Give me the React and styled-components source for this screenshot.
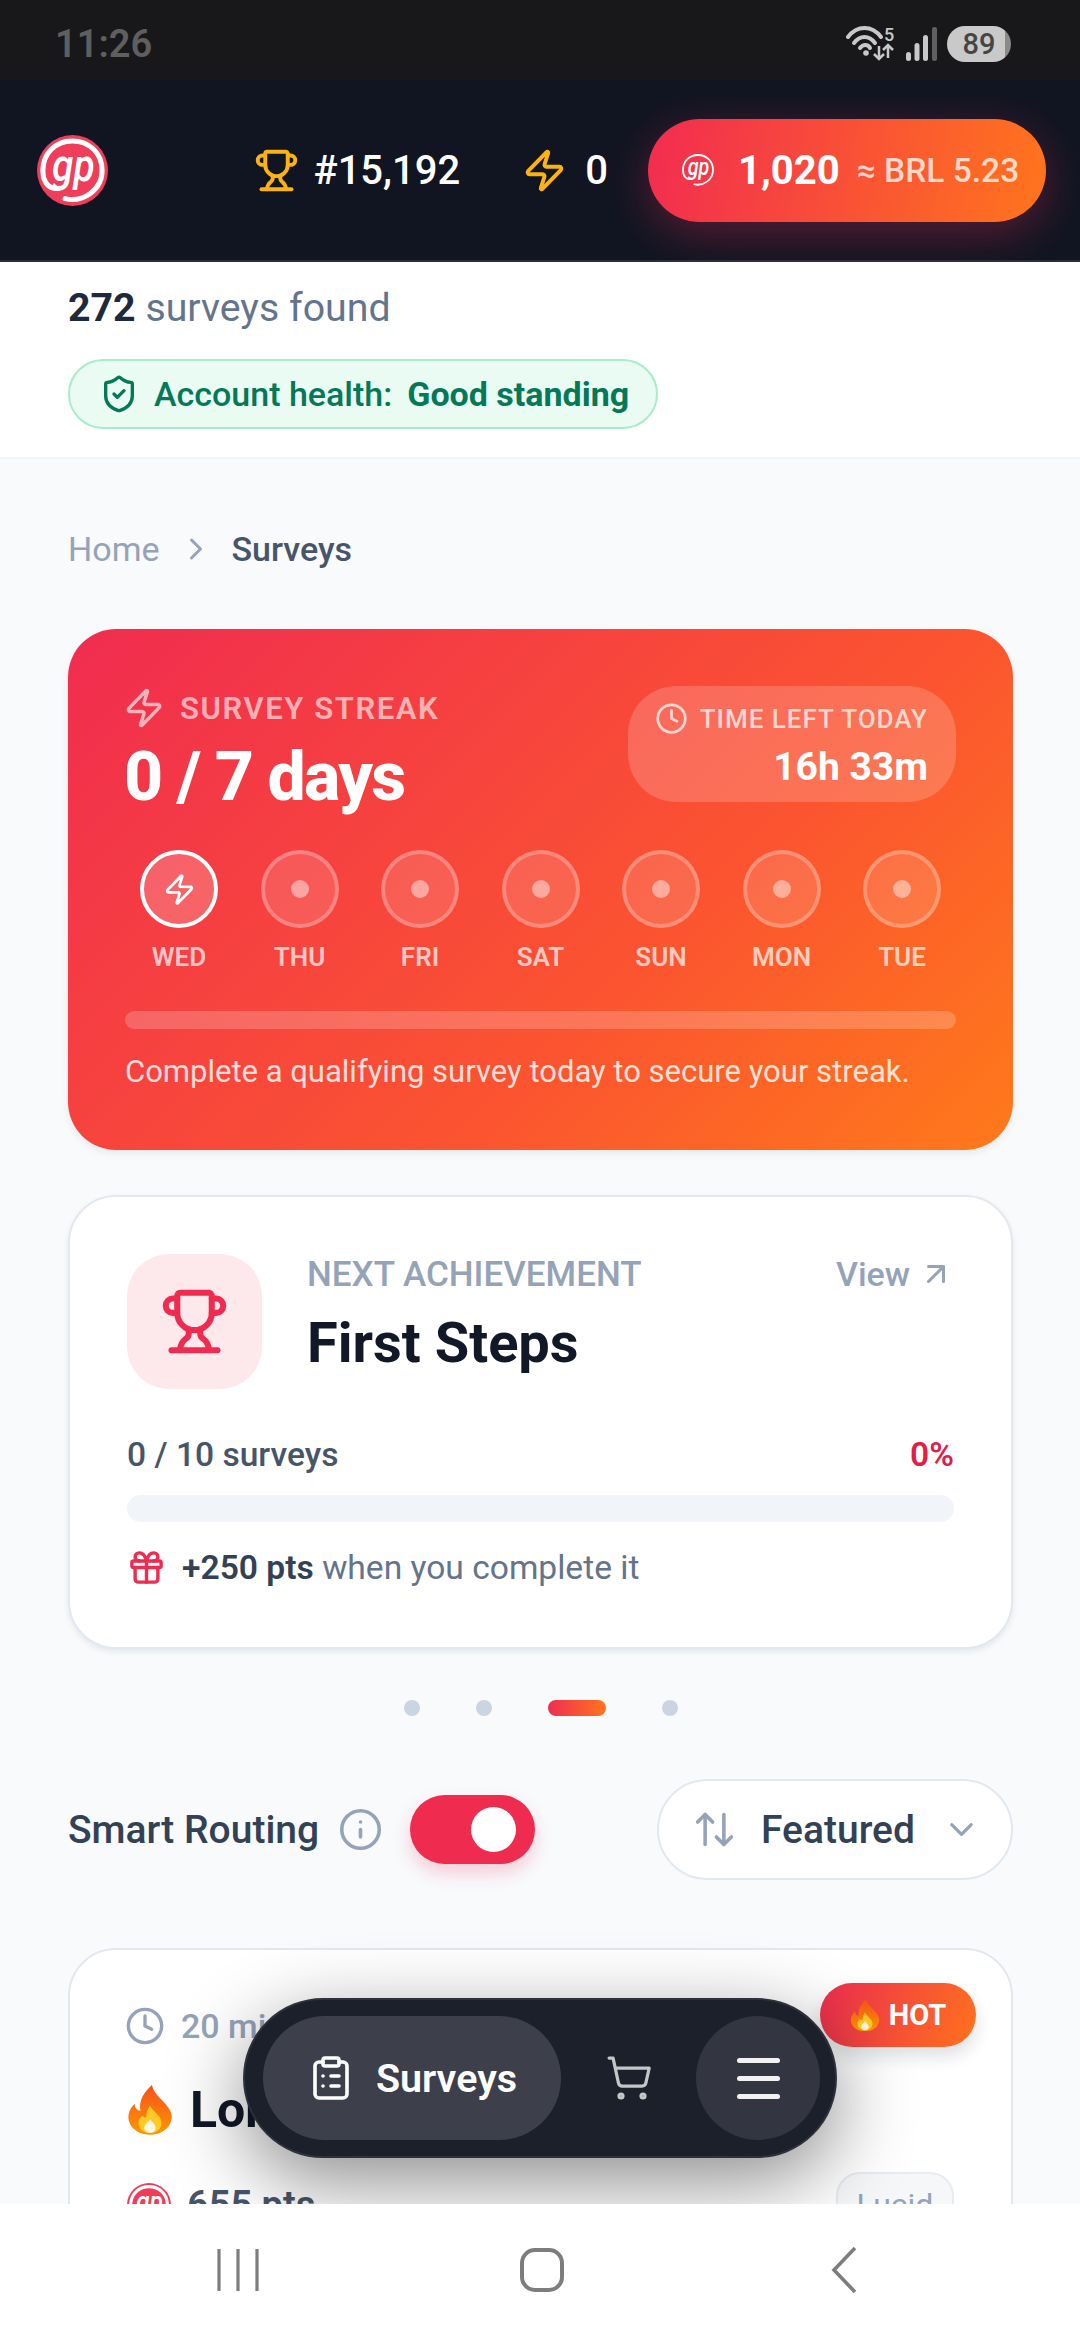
import React from 'react';
import styled, { createGlobalStyle } from 'styled-components';
import { Trophy, Zap, Clock, ShieldCheck, ChevronRight, ChevronDown, Gift, ArrowUpRight, Info, ArrowUpDown, ClipboardList, ShoppingCart } from 'lucide-react';

const Global = createGlobalStyle`
  html, body { margin: 0; padding: 0; background: #fff; }
  * { box-sizing: border-box; }
  svg { flex-shrink: 0; }
  body { font-family: Roboto, "Noto Sans", sans-serif; }
`;

const Screen = styled.div`
  width: 1080px; height: 2340px; display: flex; flex-direction: column; overflow: hidden; background: #fff;
`;
const StatusBar = styled.div`
  height: 80px; flex: none; background: #18181a; display: flex; align-items: center; justify-content: space-between;
  padding: 0 69px 0 55px;
`;
const Time = styled.span`font-size: 38px; font-weight: 600; color: #5f5f5f; margin-top: 7px;`;
const StatusIcons = styled.div`display: flex; align-items: center; gap: 10px; margin-top: 8px;`;
const Battery = styled.div`
  width: 64px; height: 36px; border-radius: 18px; overflow: hidden; display: flex; align-items: center; justify-content: center;
  font-size: 29px; font-weight: 500; color: #454545; background: linear-gradient(90deg, #c9c9c9 91%, #8a8a8a 91%);
`;
const Header = styled.header`
  height: 182px; flex: none; background: #111522; border-bottom: 2px solid #2a2e3a; display: flex; align-items: center;
  padding: 0 34px 0 37px;
`;
const HeaderStats = styled.div`margin-left: auto; display: flex; align-items: center;`;
const Stat = styled.div`
  display: flex; align-items: center; gap: ${p => p.$gap}px; margin-right: ${p => p.$mr}px;
  font-size: 40px; font-weight: 500; color: #fff;
  svg { color: #fbb313; }
`;
const PointsPill = styled.div`
  width: 398px; height: 103px; border-radius: 52px; background: linear-gradient(100deg, #f22c50, #ff751c);
  box-shadow: 0 12px 45px rgba(240, 45, 80, .32); display: flex; align-items: center; padding-left: 32px; color: #fff;
`;
const PointsValue = styled.span`font-size: 40px; font-weight: 700; margin: 0 17px 0 22px;`;
const PointsFiat = styled.span`font-size: 33.5px; font-weight: 500; color: rgba(255,255,255,.75); white-space: nowrap;`;

const Summary = styled.section`
  height: 197px; flex: none; background: #fff; border-bottom: 2px solid #f1f5f9; padding: 23px 68px 0;
`;
const Found = styled.div`
  font-size: 39.3px; line-height: 46px; color: #64748b;
  b { font-weight: 700; color: #1e293b; }
`;
const HealthPill = styled.div`
  margin-top: 28px; width: 590px; height: 70px; border-radius: 35px; background: #e9fbf3; border: 2px solid #a7eccb;
  display: flex; align-items: center; padding-left: 29px; gap: 15px; font-size: 34px; font-weight: 500; color: #047857; white-space: nowrap;
  b { font-weight: 700; margin-left: 15px; }
`;

const Scroll = styled.main`
  flex: 1; min-height: 0; position: relative; overflow: hidden; background: #f8fafc; padding: 0 67px 0 68px;
`;
const Crumbs = styled.nav`
  height: 44px; margin-top: 68px; display: flex; align-items: center; font-size: 34px; color: #94a3b8; 
  b { font-weight: 500; color: #475569; margin-left: 18px; }
  svg { margin-left: 18px; }
`;
const StreakCard = styled.section`
  margin-top: 58px; height: 521px; border-radius: 48px; padding: 57px; color: #fff;
  background: linear-gradient(135deg, #f02c50 0%, #fb5430 62%, #ff7a1a 100%);
  box-shadow: 0 3px 9px rgba(15,23,42,.08);
`;
const StreakTop = styled.div`display: flex; justify-content: space-between; height: 164px;`;
const StreakLabel = styled.div`
  display: flex; align-items: center; gap: 15px; font-size: 31px; font-weight: 600; letter-spacing: 1.6px; color: rgba(255,255,255,.62); margin: 1px 0 0 -2px;
`;
const StreakTitle = styled.div`font-size: 68px; line-height: 76px; font-weight: 800; letter-spacing: -1.7px; margin: 10px 0 0 -1px;`;
const TimeBox = styled.div`
  width: 328px; height: 116px; border-radius: 48px; background: rgba(255,255,255,.18); padding: 16px 28px 0 28px; text-align: right;
`;
const TimeLabel = styled.div`
  display: flex; align-items: center; justify-content: flex-end; gap: 12px; font-size: 26px; line-height: 32px; font-weight: 500; letter-spacing: 1px; color: rgba(255,255,255,.72); white-space: nowrap;
`;
const TimeValue = styled.div`font-size: 39px; line-height: 46px; font-weight: 700; margin-top: 9px;`;
const Days = styled.div`display: flex; justify-content: space-between;`;
const Day = styled.div`width: 108px; display: flex; flex-direction: column; align-items: center;`;
const DayCircle = styled.div`
  width: 78px; height: 78px; border-radius: 50%; display: flex; align-items: center; justify-content: center;
  border: 4.5px solid ${p => p.$active ? '#fff' : 'rgba(255,255,255,.25)'};
  background: ${p => p.$active ? 'rgba(255,255,255,.2)' : 'rgba(255,255,255,.13)'};
`;
const DayDot = styled.span`width: 18px; height: 18px; border-radius: 50%; background: rgba(255,255,255,.45);`;
const DayName = styled.div`font-size: 26px; line-height: 32px; margin-top: 13px; font-weight: 600; color: rgba(255,255,255,.7);`;
const StreakBar = styled.div`height: 18px; margin-top: 38px; border-radius: 9px; background: rgba(255,255,255,.2);`;
const StreakNote = styled.div`font-size: 31px; line-height: 38px; margin-top: 24px; color: rgba(255,255,255,.82); white-space: nowrap;`;

const AchievementCard = styled.section`
  margin-top: 45px; height: 454px; border-radius: 48px; background: #fff; border: 2px solid #e2e8f0; padding: 57px 57px 0 57px;
  box-shadow: 0 3px 6px rgba(15,23,42,.08);
`;
const AchieveTop = styled.div`display: flex;`;
const IconTile = styled.div`
  width: 135px; height: 135px; flex: none; border-radius: 42px; background: #fde8ec; color: #ee2b50; display: flex; align-items: center; justify-content: center;
`;
const AchieveText = styled.div`flex: 1; margin-left: 45px; min-width: 0;`;
const AchieveHead = styled.div`display: flex; justify-content: space-between; align-items: center; height: 40px; color: #94a3b8; font-size: 35px; font-weight: 500;`;
const ViewLink = styled.span`display: flex; align-items: center; gap: 8px; font-size: 34px; margin-right: 0;`;
const AchieveTitle = styled.div`font-size: 56px; line-height: 64px; font-weight: 700; color: #111827; margin-top: 17px;`;
const ProgressHead = styled.div`
  display: flex; justify-content: space-between; margin-top: 47px; font-size: 33.6px; line-height: 38px; font-weight: 500; color: #475569;
  b { color: #e11d48; font-weight: 600; }
`;
const Track = styled.div`height: 27px; margin-top: 21px; border-radius: 14px; background: #f1f5f9;`;
const Reward = styled.div`
  display: flex; align-items: center; gap: 16px; margin-top: 26px; font-size: 33.6px; line-height: 38px; color: #64748b;
  svg { color: #ee2b50; }
  b { font-weight: 600; color: #334155; }
`;
const Dots = styled.div`display: flex; align-items: center; justify-content: center; gap: 56px; height: 16px; margin-top: 51px;`;
const Dot = styled.span`
  height: 16px; border-radius: 8px; flex: none;
  width: ${p => p.$active ? 58 : 16}px;
  background: ${p => p.$active ? 'linear-gradient(90deg,#f02d50,#ff751c)' : '#cbd5e1'};
`;
const Controls = styled.div`display: flex; align-items: center; justify-content: space-between; margin-top: 63px;`;
const Routing = styled.div`display: flex; align-items: center; font-size: 39px; font-weight: 500; color: #334155;`;
const InfoWrap = styled.span`display: flex; color: #94a3b8; margin: 0 27px 0 19px;`;
const Toggle = styled.div`
  width: 125px; height: 69px; border-radius: 35px; background: #ef2b50; display: flex; align-items: center; justify-content: flex-end; padding-right: 19px;
  box-shadow: 0 9px 18px rgba(239,43,80,.22);
`;
const Knob = styled.span`width: 45px; height: 45px; border-radius: 50%; background: #fff;`;
const SortButton = styled.div`
  width: 356px; height: 101px; border-radius: 51px; background: #fff; border: 2px solid #e2e8f0; display: flex; align-items: center;
  padding: 0 30px 0 33px; font-size: 39px; font-weight: 500; color: #334155;
  svg { color: #94a3b8; }
  span { margin: 0 auto 0 24px; }
`;
const SurveyCard = styled.article`
  margin-top: 68px; height: 420px; border-radius: 48px; background: #fff; border: 2px solid #e2e8f0; padding: 56px 57px; position: relative;
`;
const SurveyTime = styled.div`display: flex; align-items: center; gap: 16px; margin-left: -2px; font-size: 34px; font-weight: 500; color: #94a3b8;`;
const SurveyTitle = styled.div`display: flex; align-items: center; gap: 17px; margin-top: 36px; height: 56px; font-size: 50px; font-weight: 700; color: #111827;`;
const SurveyFoot = styled.div`display: flex; align-items: center; justify-content: space-between; margin-top: 34px;`;
const SurveyPts = styled.div`display: flex; align-items: center; gap: 16px; font-size: 38px; font-weight: 600; color: #475569;`;
const SourceTag = styled.span`
  width: 118px; height: 66px; border-radius: 24px; background: #f6f7f9; border: 2px solid #e8ebef; display: flex; align-items: center; justify-content: center;
  font-size: 32px; color: #94a3b8;
`;
const HotBadge = styled.div`
  position: absolute; right: 35px; top: 33px; width: 156px; height: 64px; border-radius: 32px; background: linear-gradient(110deg,#ec2d50,#ff721d);
  box-shadow: 0 9px 18px rgba(15,23,42,.14); display: flex; align-items: center; justify-content: center; gap: 9px; color: #fff; font-size: 29px; font-weight: 700;
`;
const FloatNav = styled.div`
  position: absolute; left: 243px; bottom: 46px; width: 594px; height: 160px; border-radius: 80px; background: #1c202b; border: 2px solid #2d313b;
  box-shadow: 0 24px 80px rgba(0,0,0,.45); display: flex; align-items: center; padding: 0 15px 0 18px; color: #fff; z-index: 3;
`;
const NavActive = styled.div`
  width: 298px; height: 124px; border-radius: 62px; background: #3d404b; display: flex; align-items: center; justify-content: center; gap: 21px; font-size: 39.5px; font-weight: 600;
`;
const NavCart = styled.div`flex: 1; display: flex; justify-content: center; color: #c4c6ca;`;
const NavMenu = styled.div`
  width: 124px; height: 124px; border-radius: 50%; background: #333640; display: flex; flex-direction: column; align-items: center; justify-content: center; gap: 13px;
  span { width: 43px; height: 5px; border-radius: 3px; background: #f2f2f2; }
`;
const SystemNav = styled.div`
  height: 136px; flex: none; background: #fff; display: flex; align-items: center; padding: 0 0 4px 217px; position: relative; z-index: 4;
  svg:nth-child(2) { margin: 0 267px 0 261px; }
`;

const GpLogo = ({ size, fill = 'none', stroke = 1, color = '#fff' }) => (
  <svg width={size} height={size} viewBox="0 0 48 48" aria-hidden="true">
    {fill !== 'none' && <circle cx="24" cy="24" r="24" fill={fill} />}
    <path d="M19 43 C 31 46 44 37 44 24 C 44 12 35 4 24 4 C 12 4 4 13 4 24 C 4 33 9 37 15 36" fill="none" stroke={color} strokeWidth={stroke * 3.4} strokeLinecap="round" />
    <text x="29" y="31" textAnchor="middle" transform="scale(.85 1)" fontFamily="Roboto, sans-serif" fontStyle="italic" fontWeight="500" fontSize="31" fill={color}>gp</text>
  </svg>
);

const Flame = ({ size, id }) => (
  <svg width={size} height={size * 1.08} viewBox="0 0 24 29" preserveAspectRatio="none" aria-hidden="true">
    <defs>
      <linearGradient id={id} x1="0" y1="0" x2="0" y2="1"><stop offset="0" stopColor="#f4511e" /><stop offset="1" stopColor="#ff9800" /></linearGradient>
    </defs>
    <path d="M13 0c1 5 4 7 7 11 3 4 4 7 3 10-1 5-6 8-11 8S2 26 1 21c-1-4 1-8 3-10 0 2 1 4 3 4C6 9 9 4 13 0z" fill={`url(#${id})`} />
    <path d="M12 12c1 3 6 6 6 10 0 4-3 6-6 6s-6-2-6-6c0-2 1-3 2-4 1 1 1 1 2 1 0-3 1-5 2-7z" fill="#ffca28" />
    <path d="M12 20c1 1.500 3 3 3 5 0 2-1.500 3-3 3s-3-1-3-3c0-2 2-3 3-5z" fill="#fff8e1" />
  </svg>
);

const Wifi = () => (
  <svg width="50" height="36" viewBox="0 0 50 36" fill="none" stroke="#c8c8c8" aria-hidden="true">
    <path d="M2 11C11 -1 26 -1 35 11" strokeWidth="4" strokeLinecap="round" />
    <path d="M8 17C14 9 23 9 29 17" strokeWidth="4" strokeLinecap="round" />
    <path d="M14 22C17 18 22 18 24 22" strokeWidth="4" strokeLinecap="round" />
    <circle cx="20" cy="27" r="2.800" fill="#c8c8c8" stroke="none" />
    <path d="M33 20v13M28 28l5 5 5-5M42 32V19M37 24l5-5 5 5" strokeWidth="2.500" />
    <text x="38" y="15" fontFamily="Roboto, sans-serif" fontSize="18" fontWeight="500" fill="#c8c8c8" stroke="none">5</text>
  </svg>
);

const Signal = () => (
  <svg width="31" height="34" viewBox="0 0 31 34" aria-hidden="true">
    <rect x="0" y="25" width="5" height="9" rx="2.500" fill="#c8c8c8" />
    <rect x="8.500" y="16" width="5" height="18" rx="2.500" fill="#c8c8c8" />
    <rect x="17" y="8" width="5" height="26" rx="2.500" fill="#c8c8c8" />
    <rect x="26" y="0" width="5" height="34" rx="2" fill="#5f5f5f" />
  </svg>
);

const days = ['WED', 'THU', 'FRI', 'SAT', 'SUN', 'MON', 'TUE'];

export default function App() {
  return (
    <Screen>
      <Global />
      <StatusBar>
        <Time>11:26</Time>
        <StatusIcons><Wifi /><Signal /><Battery>89</Battery></StatusIcons>
      </StatusBar>
      <Header>
        <GpLogo size={71} fill="#ef3d5a" />
        <HeaderStats>
          <Stat $gap={15} $mr={62}><Trophy size={45} strokeWidth={2.1} />#15,192</Stat>
          <Stat $gap={18} $mr={40}><Zap size={45} strokeWidth={2.1} />0</Stat>
          <PointsPill>
            <GpLogo size={36} stroke={0.7} />
            <PointsValue>1,020</PointsValue>
            <PointsFiat>≈ BRL 5.23</PointsFiat>
          </PointsPill>
        </HeaderStats>
      </Header>
      <Summary>
        <Found><b>272</b> surveys found</Found>
        <HealthPill><ShieldCheck size={40} strokeWidth={2} /><span>Account health:<b>Good standing</b></span></HealthPill>
      </Summary>
      <Scroll>
        <Crumbs>Home<ChevronRight size={36} strokeWidth={2} /><b>Surveys</b></Crumbs>
        <StreakCard>
          <StreakTop>
            <div>
              <StreakLabel><Zap size={42} strokeWidth={2} />SURVEY STREAK</StreakLabel>
              <StreakTitle>0 / 7 days</StreakTitle>
            </div>
            <TimeBox>
              <TimeLabel><Clock size={33} strokeWidth={2} />TIME LEFT TODAY</TimeLabel>
              <TimeValue>16h 33m</TimeValue>
            </TimeBox>
          </StreakTop>
          <Days>
            {days.map((d, i) => (
              <Day key={d}>
                <DayCircle $active={i === 0}>
                  {i === 0 ? <Zap size={33} strokeWidth={2} /> : <DayDot />}
                </DayCircle>
                <DayName>{d}</DayName>
              </Day>
            ))}
          </Days>
          <StreakBar />
          <StreakNote>Complete a qualifying survey today to secure your streak.</StreakNote>
        </StreakCard>
        <AchievementCard>
          <AchieveTop>
            <IconTile><Trophy size={69} strokeWidth={2.1} /></IconTile>
            <AchieveText>
              <AchieveHead>
                <span>NEXT ACHIEVEMENT</span>
                <ViewLink>View<ArrowUpRight size={36} strokeWidth={2} /></ViewLink>
              </AchieveHead>
              <AchieveTitle>First Steps</AchieveTitle>
            </AchieveText>
          </AchieveTop>
          <ProgressHead><span>0 / 10 surveys</span><b>0%</b></ProgressHead>
          <Track />
          <Reward><Gift size={39} strokeWidth={2.1} /><span><b>+250 pts</b> when you complete it</span></Reward>
        </AchievementCard>
        <Dots><Dot /><Dot /><Dot $active /><Dot /></Dots>
        <Controls>
          <Routing>Smart Routing<InfoWrap><Info size={45} strokeWidth={1.9} /></InfoWrap><Toggle><Knob /></Toggle></Routing>
          <SortButton><ArrowUpDown size={45} strokeWidth={1.9} /><span>Featured</span><ChevronDown size={39} strokeWidth={2} /></SortButton>
        </Controls>
        <SurveyCard>
          <SurveyTime><Clock size={40} strokeWidth={2} />20 min</SurveyTime>
          <SurveyTitle><Flame size={46} id="flame-title" />Long Survey</SurveyTitle>
          <SurveyFoot>
            <SurveyPts><GpLogo size={44} fill="#ef3d5a" />655 pts</SurveyPts>
            <SourceTag>Lucid</SourceTag>
          </SurveyFoot>
          <HotBadge><Flame size={30} id="flame-hot" />HOT</HotBadge>
        </SurveyCard>
        <FloatNav>
          <NavActive><ClipboardList size={48} strokeWidth={1.8} />Surveys</NavActive>
          <NavCart><ShoppingCart size={48} strokeWidth={1.6} /></NavCart>
          <NavMenu><span /><span /><span /></NavMenu>
        </FloatNav>
      </Scroll>
      <SystemNav>
        <svg width="42" height="44" viewBox="0 0 42 44" fill="none" stroke="#7d7d7d" strokeWidth="3.200" aria-hidden="true"><path d="M2 1v42M21 1v42M40 1v42" /></svg>
        <svg width="44" height="44" viewBox="0 0 44 44" fill="none" stroke="#7d7d7d" strokeWidth="4" aria-hidden="true"><rect x="2" y="2" width="40" height="40" rx="13" /></svg>
        <svg width="26" height="46" viewBox="0 0 26 46" fill="none" stroke="#7d7d7d" strokeWidth="3.600" aria-hidden="true"><path d="M24 1L3 23l21 22" /></svg>
      </SystemNav>
    </Screen>
  );
}
